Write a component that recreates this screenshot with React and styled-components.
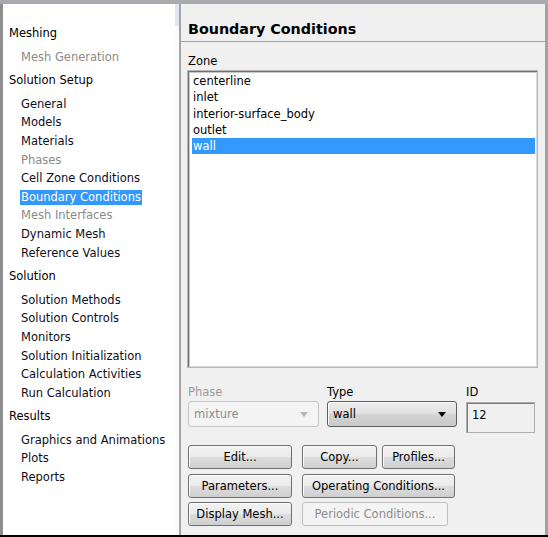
import React from "react";
import styled, { createGlobalStyle } from "styled-components";

const GlobalStyle = createGlobalStyle`
  html, body {
    margin: 0;
    padding: 0;
    background: #ffffff;
  }
  body {
    font-family: "DejaVu Sans", "Liberation Sans", sans-serif;
    font-size: 11.5px;
    color: #000;
  }
`;

const Window = styled.div`
  width: 548px;
  height: 537px;
  box-sizing: border-box;
  display: flex;
  border-top: 4px solid #a9aaad;
  border-bottom: 2px solid #000;
  overflow: hidden;
`;

const Sidebar = styled.div`
  width: 175px;
  flex: none;
  background: #fff;
  border-left: 3px solid #8e8e8e;
  padding-top: 20px;
  box-sizing: border-box;
`;

const Splitter = styled.div`
  width: 6px;
  flex: none;
  background: linear-gradient(#dfe6f2 0, #dfe6f2 22px, #fbfbfb 22px);
  border-right: 2px solid #a5a5a5;
  box-sizing: border-box;
`;

const Group = styled.div`
  margin-bottom: 5px;
`;

const Header = styled.div`
  height: 18.6px;
  line-height: 18.6px;
  padding-left: 6px;
  margin-bottom: 5px;
  white-space: nowrap;
`;

const Item = styled.div`
  height: 18.6px;
  line-height: 18.6px;
  padding-left: 18px;
  white-space: nowrap;
  color: ${(p) => (p.$disabled ? "#8a8a8a" : "#0d0d1a")};
`;

const Selected = styled.span`
  display: inline-block;
  background: #3399ff;
  color: #fff;
  line-height: 15px;
  padding: 0 1px;
  margin-left: -1px;
`;

const Main = styled.div`
  flex: 1;
  background: #f0f0f0;
  border-right: 3px solid #a2a2a2;
  display: flex;
  flex-direction: column;
`;

const TitleBar = styled.div`
  height: 38px;
  box-sizing: border-box;
  border-bottom: 1px solid #a0a0a0;
  padding: 16px 0 0 7px;
  font-weight: bold;
  font-size: 14.3px;
  line-height: 18px;
`;

const Body = styled.div`
  padding: 12px 7px 0 7px;
  display: flex;
  flex-direction: column;
`;

const Label = styled.div`
  line-height: 14px;
  height: 14px;
  color: ${(p) => (p.$disabled ? "#999" : "#000")};
`;

const ListBox = styled.div`
  margin: 2px 0 0 -1px;
  height: 298px;
  width: 351px;
  box-sizing: border-box;
  background: #fff;
  border: 1px solid #b8b8b8;
  box-shadow: inset 1px 1px 0 #6f6f6f, inset -1px -1px 0 #d8d8d8,
    inset 2px 2px 0 #c8c8c8;
  padding: 2px 2px 0 4px;
`;

const Zone = styled.div`
  height: 16.3px;
  line-height: 16.3px;
  padding-left: 1px;
  background: ${(p) => (p.$active ? "#3399ff" : "transparent")};
  color: ${(p) => (p.$active ? "#fff" : "#000")};
  white-space: nowrap;
`;

const FieldRow = styled.div`
  display: flex;
  margin-top: 17px;
`;

const Field = styled.div`
  width: ${(p) => p.$w}px;
  margin-right: ${(p) => p.$gap || 0}px;
  display: flex;
  flex-direction: column;
`;

const Combo = styled.div`
  margin-top: 2px;
  height: 26px;
  box-sizing: border-box;
  display: flex;
  align-items: center;
  justify-content: space-between;
  padding: 0 10px 0 5px;
  border-radius: 3px;
  border: 1px solid ${(p) => (p.$disabled ? "#c4c4c4" : "#5e5e5e")};
  color: ${(p) => (p.$disabled ? "#8c8c8c" : "#000")};
  background: ${(p) =>
    p.$disabled
      ? "#f4f4f4"
      : "linear-gradient(#ececec 0%, #e2e2e2 45%, #d2d2d2 55%, #c9c9c9 100%)"};
  box-shadow: ${(p) => (p.$disabled ? "none" : "inset 1px 1px 0 #fafafa")};
`;

const Arrow = styled.span`
  width: 0;
  height: 0;
  border-left: 4px solid transparent;
  border-right: 4px solid transparent;
  border-top: 5px solid ${(p) => (p.$disabled ? "#b4b4b4" : "#000")};
`;

const IdBox = styled.div`
  margin-top: 3px;
  height: 31px;
  box-sizing: border-box;
  background: #f0f0f0;
  border: 1px solid #adadad;
  box-shadow: inset 1px 1px 0 #7a7a7a;
  padding: 5px 0 0 5px;
  line-height: 14px;
`;

const Buttons = styled.div`
  display: grid;
  grid-template-columns: 104px 153px;
  column-gap: 10px;
  row-gap: 4.5px;
  margin-top: 12px;
`;

const Pair = styled.div`
  display: flex;
  gap: 5px;
`;

const Button = styled.div`
  height: 24px;
  box-sizing: border-box;
  width: ${(p) => (p.$w ? `${p.$w}px` : "auto")};
  flex: ${(p) => (p.$w ? "none" : "1")};
  display: flex;
  align-items: center;
  justify-content: center;
  border-radius: 3px;
  white-space: nowrap;
  border: 1px solid ${(p) => (p.$disabled ? "#bfbfbf" : "#707070")};
  color: ${(p) => (p.$disabled ? "#8c8c8c" : "#000")};
  background: ${(p) =>
    p.$disabled
      ? "#f4f4f4"
      : "linear-gradient(#f2f2f2 0%, #ebebeb 48%, #dddddd 52%, #cfcfcf 100%)"};
  box-shadow: ${(p) => (p.$disabled ? "none" : "inset 1px 1px 0 #fcfcfc")};
`;

const tree = [
  { title: "Meshing", items: [{ name: "Mesh Generation", disabled: true }] },
  {
    title: "Solution Setup",
    items: [
      { name: "General" },
      { name: "Models" },
      { name: "Materials" },
      { name: "Phases", disabled: true },
      { name: "Cell Zone Conditions" },
      { name: "Boundary Conditions", selected: true },
      { name: "Mesh Interfaces", disabled: true },
      { name: "Dynamic Mesh" },
      { name: "Reference Values" },
    ],
  },
  {
    title: "Solution",
    items: [
      { name: "Solution Methods" },
      { name: "Solution Controls" },
      { name: "Monitors" },
      { name: "Solution Initialization" },
      { name: "Calculation Activities" },
      { name: "Run Calculation" },
    ],
  },
  {
    title: "Results",
    items: [
      { name: "Graphics and Animations" },
      { name: "Plots" },
      { name: "Reports" },
    ],
  },
];

const zones = ["centerline", "inlet", "interior-surface_body", "outlet", "wall"];

const App = () => {
  return (
    <Window>
      <GlobalStyle />
      <Sidebar>
        {tree.map((group) => (
          <Group key={group.title}>
            <Header>{group.title}</Header>
            {group.items.map((item) => (
              <Item key={item.name} $disabled={item.disabled}>
                {item.selected ? <Selected>{item.name}</Selected> : item.name}
              </Item>
            ))}
          </Group>
        ))}
      </Sidebar>
      <Splitter />
      <Main>
        <TitleBar>Boundary Conditions</TitleBar>
        <Body>
          <Label>Zone</Label>
          <ListBox>
            {zones.map((z) => (
              <Zone key={z} $active={z === "wall"}>
                {z}
              </Zone>
            ))}
          </ListBox>
          <FieldRow>
            <Field $w={131} $gap={8}>
              <Label $disabled>Phase</Label>
              <Combo $disabled>
                mixture
                <Arrow $disabled />
              </Combo>
            </Field>
            <Field $w={130} $gap={9}>
              <Label>Type</Label>
              <Combo>
                wall
                <Arrow />
              </Combo>
            </Field>
            <Field $w={69}>
              <Label>ID</Label>
              <IdBox>12</IdBox>
            </Field>
          </FieldRow>
          <Buttons>
            <Button>Edit...</Button>
            <Pair>
              <Button $w={75}>Copy...</Button>
              <Button>Profiles...</Button>
            </Pair>
            <Button>Parameters...</Button>
            <Button>Operating Conditions...</Button>
            <Button>Display Mesh...</Button>
            <Button $w={146} $disabled>
              Periodic Conditions...
            </Button>
          </Buttons>
        </Body>
      </Main>
    </Window>
  );
};

export default App;
